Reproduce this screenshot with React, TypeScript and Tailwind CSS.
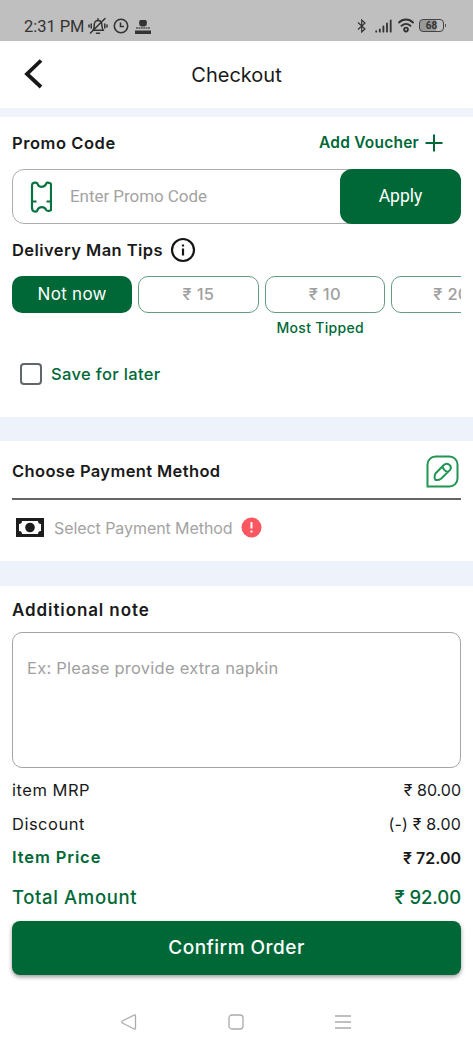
import type { ReactNode } from "react";

const tips = [
  { label: "Not now", selected: true },
  { label: "₹ 15" },
  { label: "₹ 10", note: "Most Tipped" },
  { label: "₹ 20" },
];

function StatusBar() {
  return (
    <div className="flex h-[41px] shrink-0 items-start bg-[#bfbfbf] pl-6 pr-[27px] pt-[17px] text-[#333]">
      <span className="h-5 w-[61px] whitespace-nowrap font-['Roboto'] text-[16.5px] leading-5 tracking-[-0.05px]">2:31 PM</span>
      <svg className="ml-[3px] h-[18px] w-5" viewBox="0 0 20 18" fill="none" stroke="currentColor" strokeWidth="1.5" strokeLinecap="round">
        <path d="M5 13c1.3-1 1.2-3 1.2-4.7C6.200 5 7.800 3.400 10 3.400c2.300 0 3.900 1.600 3.900 4.900 0 1.700 0 3.500 1.300 4.700M5 13.300h10.500M8.500 16.200h3M17 1.500 2.500 16M10 1.800v1.500M3.200 7v4M1 8v2M16.800 7v4M19 8v2" />
      </svg>
      <svg className="ml-[5px] mt-px h-4 w-4" viewBox="0 0 16 16" fill="none" stroke="currentColor" strokeWidth="1.6">
        <circle cx="8" cy="8" r="6.700" />
        <path d="M7.500 4.500v4h3.500" />
      </svg>
      <svg className="ml-[6px] mt-[2px] h-4 w-4" viewBox="0 0 16 16" fill="currentColor">
        <path d="M5 1h6l1 2-.5 3.500-2 1h-3l-2-1L4 3zM0 11.500h16V15H0z" />
        <path d="M1 9h14" stroke="currentColor" strokeWidth="1.300" strokeDasharray="2 .4" opacity=".75" />
      </svg>
      <div className="flex-1" />
      <svg className="mt-[2px] h-[14px] w-[10px]" viewBox="0 0 10 14" fill="none" stroke="currentColor" strokeWidth="1.200">
        <path d="m1 3.500 7 6.500-3.300 3V1L8 4 1 10.500" />
      </svg>
      <svg className="ml-[8px] mt-[2px] h-[14px] w-[17px]" viewBox="0 0 17 14" stroke="currentColor" strokeWidth="1.800" strokeLinecap="round">
        <path d="M1.200 12.200v.5M4.800 10.500v2.200M8.400 7.500v5.200M12 4.500v8.200M15.700 1.500v11.200" />
      </svg>
      <svg className="ml-[6px] mt-px h-[15px] w-4" viewBox="0 0 16 15" fill="none" stroke="currentColor" strokeWidth="1.800" strokeLinecap="round">
        <path d="M1 4.500c4-4 10-4 14 0M3.500 7.800c2.800-2.400 6.200-2.400 9 0" />
        <circle cx="8" cy="11.600" r="1.900" />
      </svg>
      <div className="ml-[5px] mt-[2px] flex h-[13px] w-[25px] items-center justify-center rounded-[4px] border-[1.5px] border-[#444] bg-[linear-gradient(to_right,#999_68%,#bfbfbf_68%)] font-['Roboto'] text-[10px] font-bold leading-none">68</div>
      <div className="ml-px mt-[7px] h-[3px] w-px bg-[#555]" />
    </div>
  );
}

function AmountRow({ label, value, className }: { label: ReactNode; value: ReactNode; className: string }) {
  return (
    <div className={`flex items-center justify-between ${className}`}>
      <span>{label}</span>
      <span>{value}</span>
    </div>
  );
}

export default function App() {
  return (
    <div className="flex h-[1050px] w-[473px] flex-col overflow-hidden whitespace-nowrap bg-white font-['Inter','Noto_Sans',sans-serif] text-[#1a1a1a]">
      <StatusBar />
      <header className="grid h-[67px] shrink-0 grid-cols-[1fr_auto_1fr] items-center">
        <svg className="-mt-px ml-6 h-[30px] w-[19px]" viewBox="0 0 19 30" fill="none" stroke="#171717" strokeWidth="3.800">
          <path d="M17 1.500 3 15l14 13" />
        </svg>
        <h1 className="text-[20px] leading-6">Checkout</h1>
      </header>
      <div className="h-[9px] shrink-0 bg-[#f1f3fa]" />

      <section className="h-[300px] shrink-0 px-3 pt-[11px]">
        <div className="flex h-[30px] items-center justify-between pr-[17px]">
          <h2 className="text-[16.5px] font-semibold tracking-[0.55px]">Promo Code</h2>
          <button className="flex items-center gap-[5px] text-[15.5px] font-semibold tracking-[0.23px] text-[#006837]">
            Add Voucher
            <svg className="h-5 w-5" viewBox="0 0 20 20" stroke="currentColor" strokeWidth="2">
              <path d="M10 1.500v17M1.500 10h17" />
            </svg>
          </button>
        </div>
        <div className="mt-[11px] flex h-[55px] items-stretch rounded-[12px] border-[1.5px] border-[#adadad] font-['Roboto']">
          <div className="flex flex-1 items-center pl-[17px]">
            <svg className="h-8 w-[22px]" viewBox="0 0 22 32" fill="none" stroke="#087340" strokeWidth="2.200">
              <path d="M21 3.500c0-1.500-4-2.500-4.600-1.200-1.200 3.600-7.400 5.200-8.600 1C7 .8 2 1 2 4.500v22c0 5 4.800 5 5.600 2.400 1.200-3.700 7.200-3.700 8.500 0 .6 1.500 4.900 1.300 4.900 0V2.500M2 20.500h4.500M16.500 20.500H21" />
            </svg>
            <span className="ml-[18px] text-[17px] tracking-[-0.05px] text-[#a3a3a3]">Enter Promo Code</span>
          </div>
          <button className="-my-px -mr-px w-[121px] rounded-[12px] bg-[#006837] text-[17.5px] text-white">Apply</button>
        </div>
        <div className="mt-[11px] flex h-[30px] items-center gap-[7px]">
          <h2 className="text-[16.5px] font-semibold tracking-[0.43px]">Delivery Man Tips</h2>
          <svg className="h-[26px] w-[26px]" viewBox="0 0 26 26" fill="none" stroke="#151515" strokeWidth="2.200">
            <circle cx="13" cy="13" r="11" />
            <path d="M13 11.500v7M13 7.500v2" />
          </svg>
        </div>
        <div className="mt-[11px] flex gap-[5.9px] overflow-hidden">
          {tips.map((tip) => (
            <div key={tip.label} className="w-[120.4px] shrink-0 text-center">
              <div className={tip.selected
                ? "flex h-[37px] items-center justify-center rounded-[10px] bg-[#006837] text-[17px] tracking-[0.3px] text-white"
                : "flex h-[37px] items-center justify-center rounded-[10px] border border-[#639d81] text-[16.5px] font-medium tracking-[0.3px] text-[#a0a0a0]"}>
                {tip.label}
              </div>
              <div className="mt-[5px] h-5 pr-[9px] text-[14px] font-medium leading-5 tracking-[0.3px] text-[#006837]">{tip.note}</div>
            </div>
          ))}
        </div>
        <div className="ml-2 mt-[25px] flex h-[22px] items-center gap-[9px]">
          <div className="h-[22px] w-[22px] rounded-[4px] border-2 border-[#60666a]" />
          <span className="text-[16.5px] font-medium tracking-[0.35px] text-[#006837]">Save for later</span>
        </div>
      </section>
      <div className="h-6 shrink-0 bg-[#eef2fa]" />

      <section className="h-[120px] shrink-0 px-3">
        <div className="flex h-[59px] items-center justify-between border-b-2 border-[#656565] pt-[3px]">
          <h2 className="text-[16.5px] font-semibold tracking-[0.37px]">Choose Payment Method</h2>
          <svg className="mr-[2px] h-[33px] w-[33px]" viewBox="0 0 33 33" fill="none" stroke="#219653" strokeWidth="2">
            <path d="M1.500 31.500v-22a8 8 0 0 1 8-8h14a8 8 0 0 1 8 8v14a8 8 0 0 1-8 8z" />
            <path d="m9.500 18.500 8-8.300c3.800-3.700 9.500 1 6.300 5L15 23.800c-1.300 1-3.500 1.500-5.500 1.200-1.100-.8-1.300-4.800 0-6.500zM16.500 11.500c.8 3 2.600 4.800 5.700 5.500" />
          </svg>
        </div>
        <div className="flex h-[55px] items-center pl-1">
          <svg className="h-[19px] w-[28px]" viewBox="0 0 28 19" fill="none">
            <path fill="#1d1d1d" d="M0 0h28v19H0z" />
            <path fill="white" d="M6 3h16c0 2 1 3 3 3v7c-2 0-3 1-3 3H6c0-2-1-3-3-3V6c2 0 3-1 3-3z" />
            <circle cx="14" cy="9.500" r="4.800" fill="#1d1d1d" />
          </svg>
          <span className="ml-[10px] text-[16px] tracking-[-0.07px] text-[#a3a3a3]">Select Payment Method</span>
          <svg className="ml-2 h-[21px] w-[21px]" viewBox="0 0 21 21">
            <circle cx="10.500" cy="10.500" r="10" fill="#fc5661" />
            <path d="M10.500 5v6.500M10.500 13.500v2" stroke="white" strokeWidth="2" />
          </svg>
        </div>
      </section>
      <div className="h-[25px] shrink-0 bg-[#eef2fa]" />

      <section className="flex flex-1 flex-col px-3">
        <h2 className="mt-3 text-[17px] font-semibold leading-6 tracking-[0.9px]">Additional note</h2>
        <div className="mt-[10px] h-[136px] shrink-0 rounded-[10px] border border-[#a5a5a5] px-[14px] pt-[23px] text-[16.5px] leading-6 tracking-[0.24px] text-[#a0a0a0]">
          <span>Ex: Please provide extra napkin</span>
        </div>
        <AmountRow className="mt-[5px] h-[34px] text-[16px]" label={<span className="text-[16.5px] tracking-[0.52px]">item MRP</span>} value="₹ 80.00" />
        <AmountRow className="h-[34px] text-[16px]" label={<span className="text-[16.5px] tracking-[0.5px]">Discount</span>} value={<span className="tracking-[0.2px]">(-) ₹ 8.00</span>} />
        <AmountRow className="h-[33px] text-[16px] font-semibold" label={<span className="text-[16.5px] tracking-[0.9px] text-[#006837]">Item Price</span>} value="₹ 72.00" />
        <AmountRow className="mt-[7px] h-[34px] text-[18.5px] font-medium text-[#006837]" label={<span className="tracking-[0.63px]">Total Amount</span>} value={<span className="tracking-[-0.1px]">₹ 92.00</span>} />
        <button className="mt-[6px] h-[54px] shrink-0 rounded-[8px] bg-[#006837] text-[19px] font-medium tracking-[0.48px] text-white shadow-[0_2px_4px_rgba(0,0,0,0.4)]">Confirm Order</button>
        <nav className="mt-[39px] grid grid-cols-3 px-[63px] text-[#ababab]">
          <svg className="-mt-px ml-[46px] h-[18px] w-4" viewBox="0 0 16 18" fill="none" stroke="currentColor" strokeWidth="1.300" strokeLinejoin="round">
            <path d="M1.300 8q-1 1 0 2l12 6q1.200.5 1.200-1V3q0-1.500-1.200-1z" />
          </svg>
          <svg className="h-4 w-4 justify-self-center" viewBox="0 0 16 16" fill="none" stroke="currentColor" strokeWidth="1.300">
            <rect x="1" y="1" width="14" height="14" rx="3" />
          </svg>
          <svg className="mr-[47px] h-4 w-4 justify-self-end" viewBox="0 0 16 16" stroke="currentColor" strokeWidth="1.300">
            <path d="M0 2h16M0 8h16M0 14h16" />
          </svg>
        </nav>
      </section>
    </div>
  );
}
